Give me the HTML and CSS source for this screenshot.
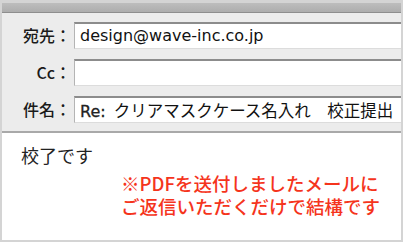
FILE: index.html
```html
<!DOCTYPE html>
<html lang="ja">
<head>
    <meta charset="UTF-8">
    <title>校正提出メール</title>
    <link rel="stylesheet" href="styles.css">
</head>
<body>

<div class="window">
    <div class="titlebar"></div>

    <div class="header">
        <label class="label">宛先：</label>
        <div class="field">design@wave-inc.co.jp</div>

        <label class="label">Cc：</label>
        <div class="field"></div>

        <label class="label">件名：</label>
        <div class="field"><span class="re">Re:</span><span class="jp">クリアマスクケース名入れ　校正提出</span></div>
    </div>

    <div class="message">
        <p class="body-text">校了です</p>
        <p class="note">※PDFを送付しましたメールに<br>ご返信いただくだけで結構です</p>
    </div>
</div>

</body>
</html>
```

FILE: styles.css
```css
html, body { margin: 0; padding: 0; background: #fff; }
body { font-family: "Noto Sans CJK JP", "DejaVu Sans", sans-serif; }

.window {
    width: 403px;
    height: 242px;
    box-sizing: border-box;
    border: 2px solid #d4d4d4;
    border-top-width: 3px;
    overflow: hidden;
    display: flex;
    flex-direction: column;
}

.titlebar {
    height: 9px;
    background: linear-gradient(#bdbdbd, #adadad);
    border-bottom: 1px solid #8e8e8e;
}

.header {
    background: #ececec;
    display: grid;
    grid-template-columns: 72px 1fr;
    row-gap: 10px;
    padding: 9px 0 8px 0;
    border-bottom: 2px solid #a9a9a9;
}

.label {
    font-size: 16px;
    font-weight: 500;
    color: #1a1a1a;
    text-align: right;
    line-height: 27px;
    padding-right: 3px;
    white-space: nowrap;
}

.field {
    height: 27px;
    box-sizing: border-box;
    background: #fff;
    border-top: 2px solid #8c8c8c;
    border-left: 1px solid #b4b4b4;
    border-bottom: 1px solid #dcdcdc;
    padding-left: 5px;
    font-family: "DejaVu Sans", sans-serif;
    font-size: 16px;
    line-height: 24px;
    color: #111;
    white-space: nowrap;
    overflow: hidden;
}

.re { color: #222; -webkit-text-stroke: 0.3px #222; }
.jp { font-family: "Noto Sans CJK JP", sans-serif; font-size: 16.5px; padding-left: 8px; }

.message {
    flex: 1;
    background: #fff;
    padding: 10px 0 0 19px;
}

.body-text {
    margin: 0;
    font-size: 18px;
    line-height: 24px;
    color: #222;
}

.note {
    margin: 5px 0 0 100px;
    font-size: 18.5px;
    line-height: 23px;
    font-weight: 500;
    color: #f5341c;
    white-space: nowrap;
}
```
